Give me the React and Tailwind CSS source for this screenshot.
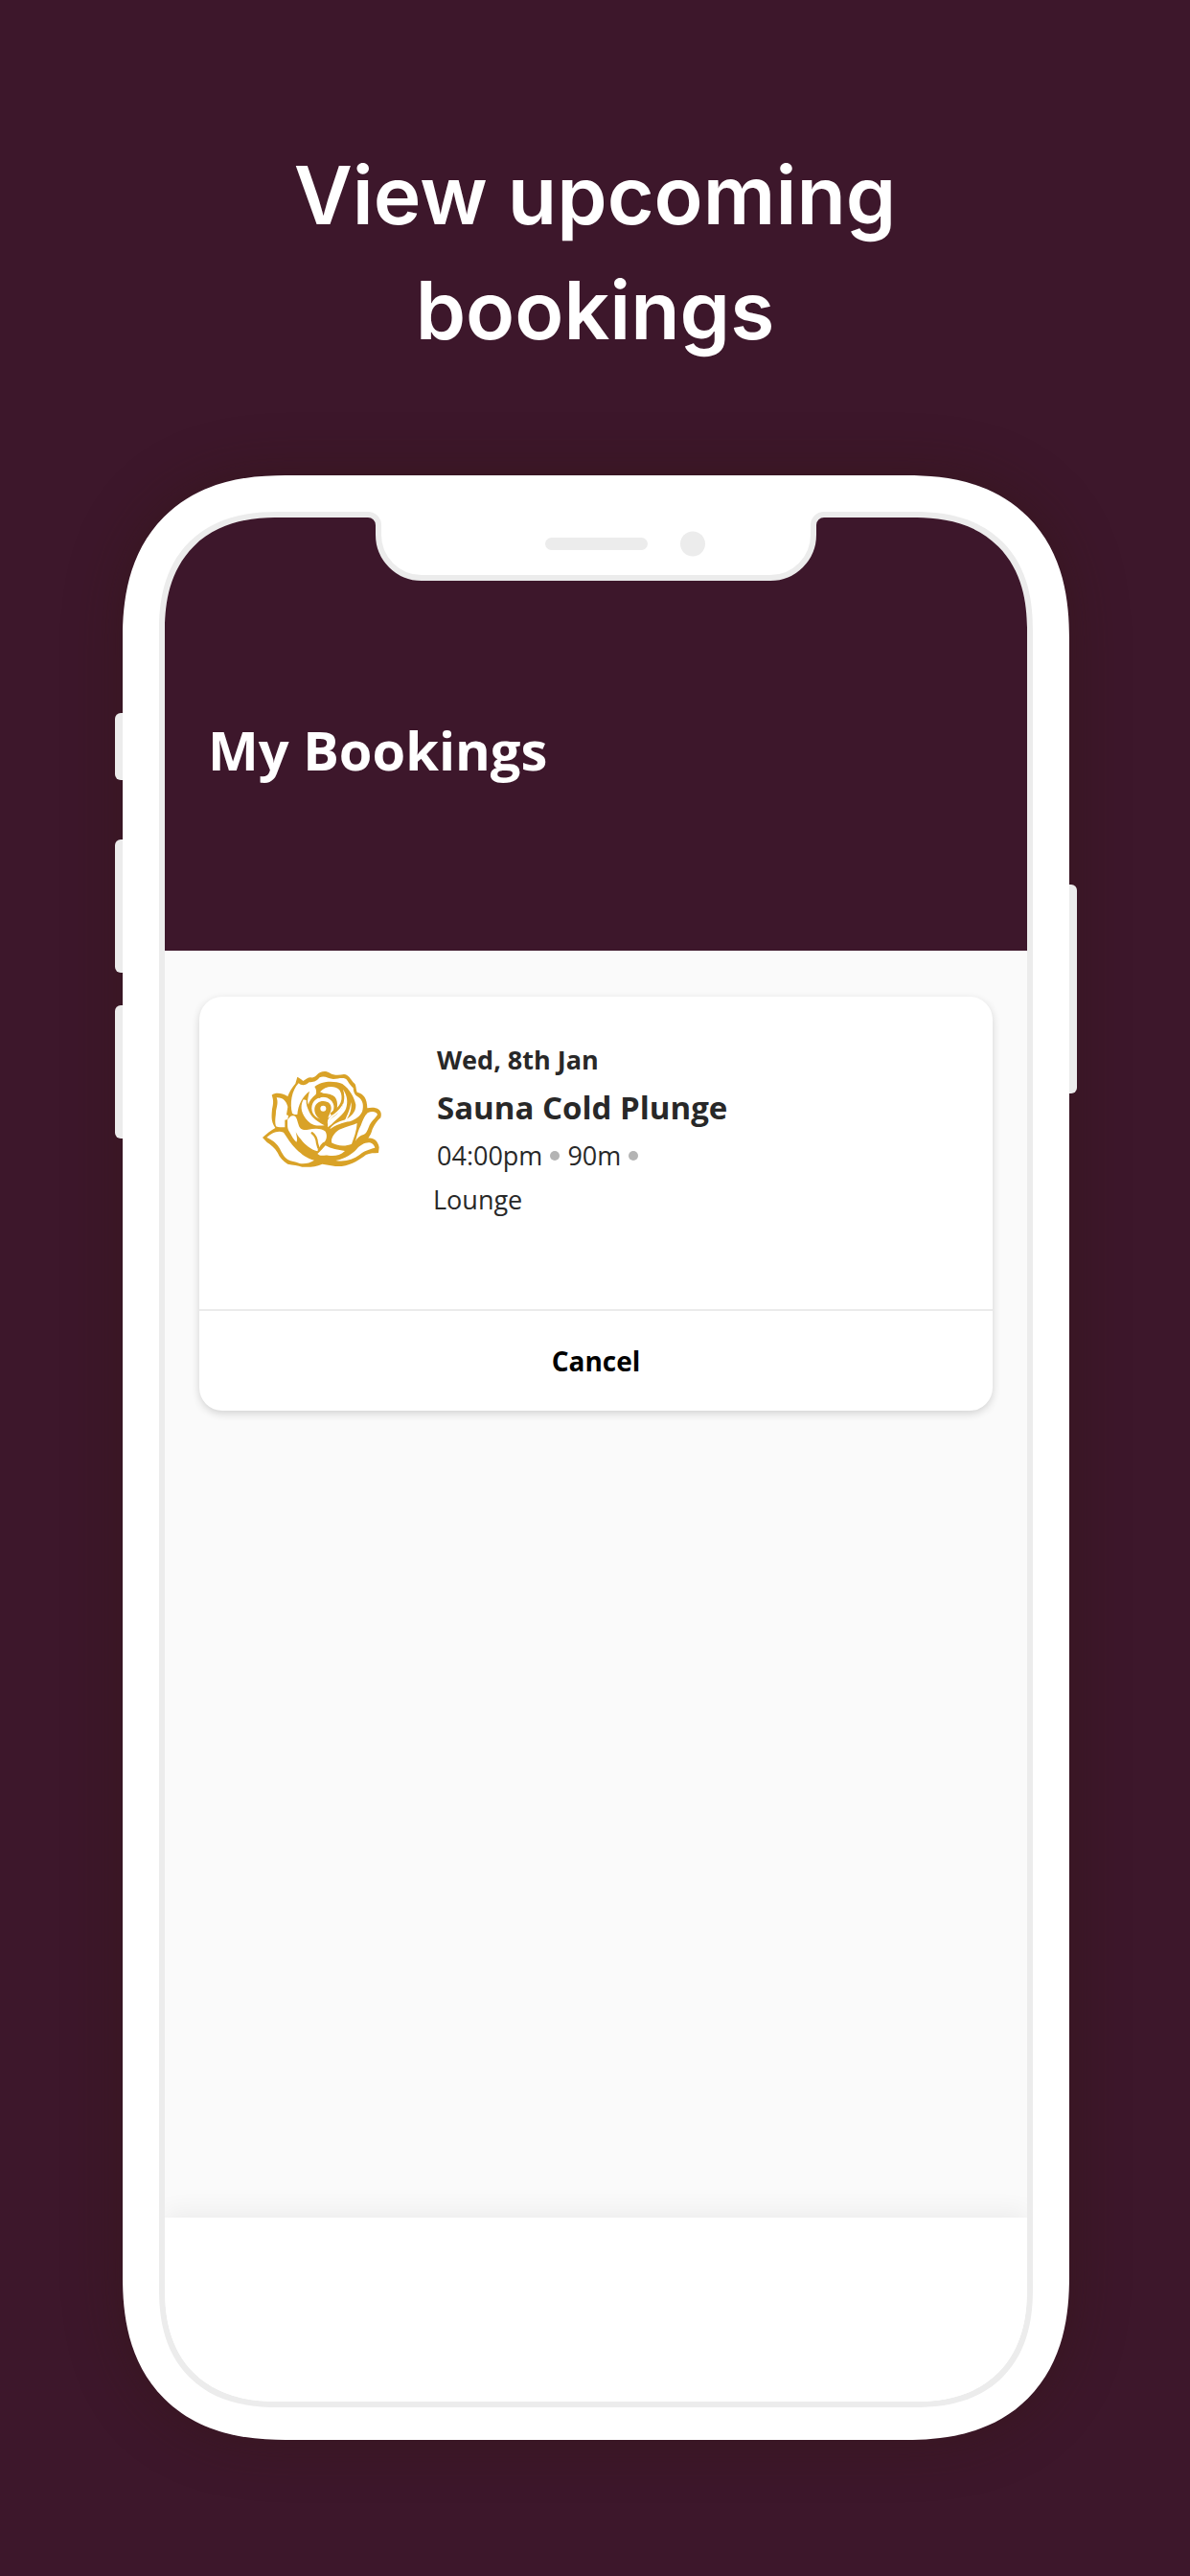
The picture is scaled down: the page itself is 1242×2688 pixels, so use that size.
const Rose = ({ className }) => (
  <svg viewBox="0 0 450 390" className={className} role="img" aria-label="Rose">
    <path
      fill="#d9a227"
      d="M151 71 C158 75 164 78 169 84 C177 79 184 73 192 73 C200 74 206 72 211 66 C222 53 240 51 253 59 C264 67 282 66 297 63 C312 64 317 78 327 89 C336 95 333 102 338 119 C358 123 370 139 370 169 C382 167 396 166 407 174 C414 180 415 190 412 199 C401 208 392 222 386 235 C383 247 379 255 373 263 C390 261 404 272 407 292 L405 309 C392 310 378 309 366 315 C345 330 325 346 290 351 C268 352 250 347 229 344 C208 352 190 355 166 353 C153 348 137 347 121 344 C106 334 96 324 89 308 C80 293 68 284 56 276 L42 261 C56 248 69 238 82 231 C67 210 71 190 72 172 C76 154 77 144 71 128 C82 120 100 120 121 132 C126 117 135 104 145 92 Z"
    />
    <g fill="#fff">
      {/* outer leaves */}
      <path d="M86 136 C106 135 117 148 121 165 L117 190 L123 192 L121 204 L112 206 L112 229 C101 228 92 230 84 226 C79 208 84 196 84 178 C88 161 91 150 86 136 Z" />
      <path d="M55 261 C70 247 90 237 108 245 C120 262 130 280 147 297 C166 315 182 327 204 332 C190 341 175 344 158 342 C144 335 132 337 121 330 C105 319 101 303 93 291 C82 275 70 267 55 261 Z" />
      <path d="M371 184 C384 178 397 179 402 189 C395 202 381 210 375 227 C370 240 366 249 358 252 C349 254 339 262 333 272 C339 252 342 236 350 223 C356 207 360 195 371 184 Z" />
      <path d="M271 333 C301 327 323 313 337 297 C354 277 386 266 394 293 C376 298 361 302 346 315 C325 331 299 338 271 333 Z" />
      <path d="M214 312 C224 304 232 294 239 286 C257 296 278 300 300 303 C284 318 267 319 248 317 C235 314 225 322 214 312 Z" />
      <path d="M258 268 C262 254 272 240 288 234 C306 227 325 222 338 216 C337 240 328 262 321 281 C303 289 274 288 258 277 Z" />
      {/* front petal */}
      <path d="M120 206 C126 198 130 192 139 193 C149 194 150 207 154 218 C158 236 170 239 185 236 C207 231 230 232 239 242 C248 257 239 277 231 277 L224 284 L214 304 C193 298 175 284 162 266 C155 261 151 251 146 244 C151 261 151 273 148 275 C139 268 133 255 126 243 C118 230 121 219 120 206 Z" />
      {/* outer rim */}
      <path d="M155 91 C163 99 176 100 188 88 C200 87 210 87 221 73 C236 66 249 77 264 78 C282 77 299 70 308 83 C314 94 321 101 326 106 C327 119 330 128 342 134 C356 143 360 160 354 180 C347 195 332 205 315 211 C294 213 271 222 253 235 C258 223 273 214 292 208 C319 199 335 181 334 158 C329 135 315 109 292 93 C266 82 226 83 205 102 C210 108 212 118 209 126 C197 136 187 148 186 158 C181 148 184 137 189 116 C168 130 153 160 151 189 C146 188 139 190 135 185 C127 156 133 113 155 91 Z" />
      {/* crescent left of the bud */}
      <path d="M170 142 C157 166 165 190 184 209 C198 224 218 225 236 223 C216 212 198 200 189 182 C182 168 178 157 179 144 Z" />
      {/* inner swirls */}
      <path d="M222 118 C240 99 266 97 283 112 C303 135 296 167 282 182 C266 192 251 204 247 222 C241 207 252 196 264 187 C279 172 281 140 263 130 C249 122 235 126 222 118 Z" />
      <path d="M294 110 C308 129 310 151 303 171 C297 188 275 201 258 220 L246 229 C245 205 262 200 276 187 C297 166 302 137 294 110 Z" />
      <path d="M319 150 C323 170 315 191 304 206 L300 207 C307 190 316 175 319 150 Z" />
      <circle cx="231" cy="169" r="35" />
    </g>
    <g fill="none" stroke="#d9a227" strokeLinecap="round">
      <path strokeWidth="9" d="M219 133 C242 120 265 135 271 158 C272 171 268 181 259 186" />
      <path strokeWidth="8" d="M262 185 C289 165 303 143 287 109" />
      <path strokeWidth="7" d="M197 247 C210 256 212 266 213 279 L217 293" />
      <path strokeWidth="6" d="M218 299 L234 281" />
    </g>
    <path
      fill="#d9a227"
      d="M232 147 C249 147 258 158 257 170 C256 184 248 191 247 202 L242 224 L223 205 C207 193 204 181 205 169 C207 155 219 147 232 147 Z"
    />
    <circle cx="232" cy="170" r="9" fill="#fff" />
  </svg>
);

const Notch = () => (
  <svg width="488" height="72" viewBox="0 0 488 72" aria-hidden="true">
    <path
      fill="#fff"
      d="M0 0 V3 H6 A11 11 0 0 1 17 14 V24 A45 45 0 0 0 62 69 H426 A45 45 0 0 0 471 24 V14 A11 11 0 0 1 482 3 H488 V0 Z"
    />
    <path
      fill="none"
      stroke="#ececec"
      strokeWidth="6"
      d="M0 3 H6 A11 11 0 0 1 17 14 V24 A45 45 0 0 0 62 69 H426 A45 45 0 0 0 471 24 V14 A11 11 0 0 1 482 3 H488"
    />
    <rect x="191" y="27" width="107" height="13" rx="6.5" fill="#ececec" />
    <circle cx="345" cy="33.5" r="13" fill="#ececec" />
  </svg>
);

const Dot = () => <span className="size-[10px] rounded-full bg-[#b4b4b4]" />;

const BookingCard = ({ booking }) => (
  <article className="overflow-hidden rounded-3xl bg-white shadow-[0_3px_8px_rgba(0,0,0,0.16)]">
    <div className="flex h-[326px] gap-[42px] pt-[43px] pl-[52px]">
      <Rose className="mt-[17px] h-[130px] w-[150px] shrink-0" />
      <div className="text-[27px] leading-[46px] text-[#282828]">
        <div className="pl-1">
          <p className="font-bold">{booking.date}</p>
          <h2 className="text-[33px] leading-[54px] font-bold">{booking.title}</h2>
          <p className="flex items-center gap-2">
            {booking.time} <Dot /> {booking.duration} <Dot />
          </p>
        </div>
        <p>{booking.room}</p>
      </div>
    </div>
    <button
      type="button"
      className="h-[106px] w-full border-t-2 border-[#ebebeb] text-[28px] font-bold text-black"
    >
      Cancel
    </button>
  </article>
);

const bookings = [
  {
    date: "Wed, 8th Jan",
    title: "Sauna Cold Plunge",
    time: "04:00pm",
    duration: "90m",
    room: "Lounge",
  },
];

const Phone = ({ children }) => (
  <div className="relative mr-[126px] ml-[128px] flex grow flex-col">
    <div className="relative flex grow flex-col rounded-[150px] bg-white px-[38px] pt-[38px] pb-[34px] shadow-[0_0_60px_rgba(48,22,16,0.45)] supports-[corner-shape:squircle]:rounded-[170px] supports-[corner-shape:squircle]:[corner-shape:superellipse(1.24)]">
      <div className="flex grow flex-col overflow-hidden rounded-[110px] border-[6px] border-[#ececec] bg-white supports-[corner-shape:squircle]:rounded-[124px] supports-[corner-shape:squircle]:[corner-shape:superellipse(1.24)]">
        {children}
      </div>
      <div className="absolute inset-x-0 top-[38px] flex justify-center">
        <Notch />
      </div>
    </div>

    {/* Side buttons */}
    <div className="absolute top-[248px] -left-2 h-[70px] w-2 rounded-l-md bg-[#ececec]" />
    <div className="absolute top-[380px] -left-2 h-[139px] w-2 rounded-l-md bg-[#ececec]" />
    <div className="absolute top-[553px] -left-2 h-[139px] w-2 rounded-l-md bg-[#ececec]" />
    <div className="absolute top-[427px] -right-2 h-[218px] w-2 rounded-r-md bg-[#ececec]" />
  </div>
);

const App = () => {
  return (
    <main className="flex min-h-screen flex-col bg-[#3d172b] pb-[142px] font-['Open_Sans',sans-serif]">
      <h1 className="mx-auto max-w-[700px] pt-[144px] pb-[112px] text-center font-['Inter',sans-serif] text-[84px] leading-[120px] font-semibold text-white">
        View upcoming bookings
      </h1>
      <Phone>
        <header className="h-[452px] bg-[#3d172b] px-[45px] pt-[206px]">
          <h2 className="text-[56px] leading-[72px] font-bold text-white">My Bookings</h2>
        </header>
        <section className="grow bg-[#fafafa] px-9 pt-12">
          {bookings.map((booking) => (
            <BookingCard key={booking.title} booking={booking} />
          ))}
        </section>
        <footer className="h-[192px] bg-white shadow-[0_-6px_24px_rgba(0,0,0,0.06)]" />
      </Phone>
    </main>
  );
};

export default App;
